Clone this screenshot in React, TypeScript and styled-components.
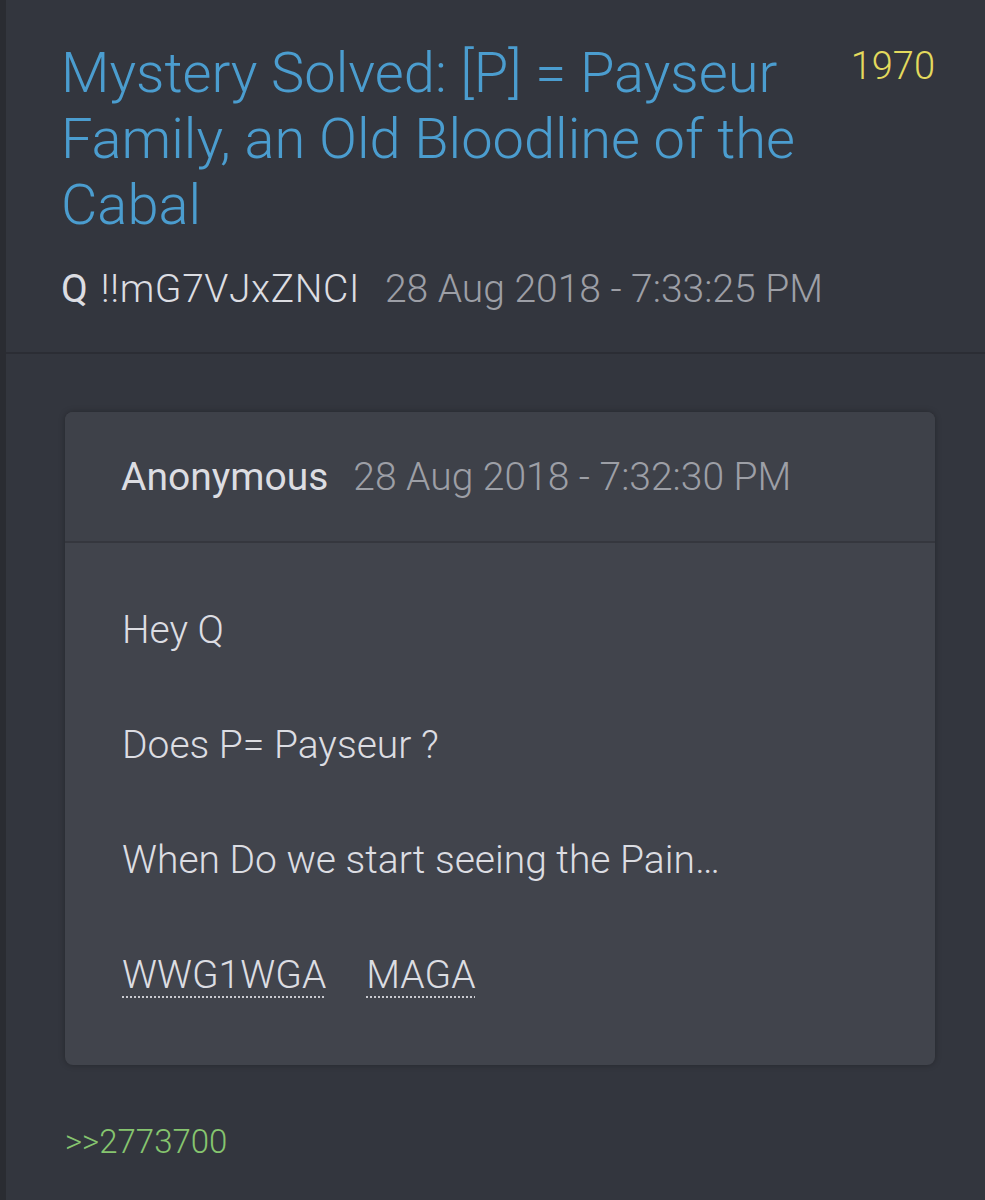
import styled, { createGlobalStyle } from 'styled-components';

const GlobalStyle = createGlobalStyle`
  html, body {
    margin: 0;
    padding: 0;
    background-color: #33363e;
  }
  body {
    font-family: Roboto, "Liberation Sans", sans-serif;
  }
`;

const Post = styled.article`
  min-height: 1200px;
  background-color: #33363e;
  border-left: 6px solid #2a2c32;
  box-sizing: border-box;
`;

const PostHeader = styled.header`
  display: flex;
  flex-direction: column;
  padding: 40px 50px 41px 55px;
  border-bottom: 2px solid #2b2d34;
`;

const TitleRow = styled.div`
  display: flex;
  align-items: flex-start;
  justify-content: space-between;
  gap: 40px;
`;

const Title = styled.h1`
  flex: 1;
  margin: 0;
  font-size: 56px;
  line-height: 66px;
  font-weight: 300;
  color: #4b9dcf;
`;

const PostNumber = styled.span`
  margin-top: 7px;
  font-size: 38px;
  line-height: 38px;
  font-weight: 300;
  color: #e3da5d;
`;

const Meta = styled.div`
  display: flex;
  align-items: baseline;
  margin-top: 29px;
  font-size: 39px;
  line-height: 44px;
  font-weight: 300;
`;

const Author = styled.span<{ $weight?: number; $gap?: number }>`
  color: #dcdde2;
  font-weight: ${(p) => p.$weight ?? 300};
  margin-right: ${(p) => p.$gap ?? 25}px;
`;

const Tripcode = styled(Author)`
  letter-spacing: 0.6px;
`;

const Timestamp = styled.span`
  color: #9d9fa6;
  font-weight: 300;
`;

const PostBody = styled.section`
  padding: 58px 50px 0 59px;
`;

const QuoteCard = styled.div`
  border-radius: 8px;
  overflow: hidden;
  background-color: #41444c;
  box-shadow: 0 0 6px rgba(0, 0, 0, 0.28);
`;

const QuoteHeader = styled.div`
  display: flex;
  align-items: center;
  height: 129px;
  padding-left: 56px;
  background-color: #3e4149;
  border-bottom: 2px solid #35373e;
  font-size: 39px;
  line-height: 44px;
`;

const QuoteText = styled.div`
  display: flex;
  flex-direction: column;
  gap: 67px;
  padding: 63px 40px 66px 57px;
  font-size: 39px;
  line-height: 48px;
  font-weight: 300;
  color: #dcdde2;
`;

const Paragraph = styled.p`
  margin: 0;
`;

const TagRow = styled.p`
  margin: 0;
  display: flex;
  gap: 40px;
`;

const Tag = styled.span`
  text-decoration: underline dotted #c9cad0;
  text-decoration-thickness: 2px;
  text-underline-offset: 8px;
`;

const Reply = styled.a`
  display: block;
  margin-top: 57px;
  font-size: 33px;
  line-height: 40px;
  font-weight: 300;
  color: #86c56f;
  text-decoration: none;
`;

export default function App() {
  return (
    <>
      <GlobalStyle />
      <Post>
        <PostHeader>
          <TitleRow>
            <Title>Mystery Solved: [P] = Payseur Family, an Old Bloodline of the Cabal</Title>
            <PostNumber>1970</PostNumber>
          </TitleRow>
          <Meta>
            <Author $weight={400} $gap={13}>Q</Author>
            <Tripcode>!!mG7VJxZNCI</Tripcode>
            <Timestamp>28 Aug 2018 - 7:33:25 PM</Timestamp>
          </Meta>
        </PostHeader>
        <PostBody>
          <QuoteCard>
            <QuoteHeader>
              <Author $weight={400}>Anonymous</Author>
              <Timestamp>28 Aug 2018 - 7:32:30 PM</Timestamp>
            </QuoteHeader>
            <QuoteText>
              <Paragraph>Hey Q</Paragraph>
              <Paragraph>Does P= Payseur ?</Paragraph>
              <Paragraph>When Do we start seeing the Pain…</Paragraph>
              <TagRow>
                <Tag>WWG1WGA</Tag>
                <Tag>MAGA</Tag>
              </TagRow>
            </QuoteText>
          </QuoteCard>
          <Reply href="#2773700">&gt;&gt;2773700</Reply>
        </PostBody>
      </Post>
    </>
  );
}
